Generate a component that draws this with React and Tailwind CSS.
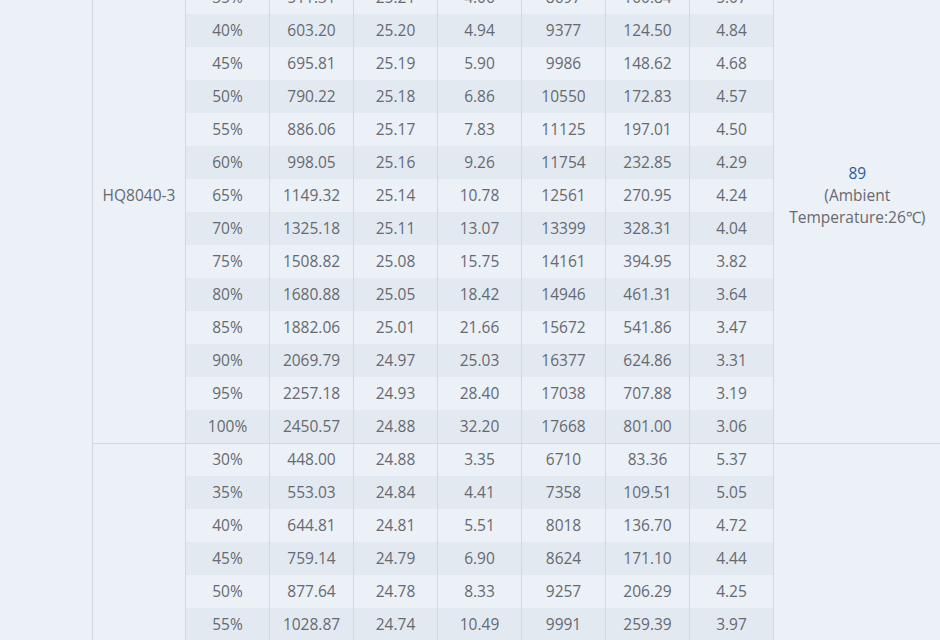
const groupA = [
  ['30%', '420.66', '25.22', '3.21', '7912', '79.40', '5.30'],
  ['35%', '511.31', '25.21', '4.06', '8697', '100.84', '5.07'],
  ['40%', '603.20', '25.20', '4.94', '9377', '124.50', '4.84'],
  ['45%', '695.81', '25.19', '5.90', '9986', '148.62', '4.68'],
  ['50%', '790.22', '25.18', '6.86', '10550', '172.83', '4.57'],
  ['55%', '886.06', '25.17', '7.83', '11125', '197.01', '4.50'],
  ['60%', '998.05', '25.16', '9.26', '11754', '232.85', '4.29'],
  ['65%', '1149.32', '25.14', '10.78', '12561', '270.95', '4.24'],
  ['70%', '1325.18', '25.11', '13.07', '13399', '328.31', '4.04'],
  ['75%', '1508.82', '25.08', '15.75', '14161', '394.95', '3.82'],
  ['80%', '1680.88', '25.05', '18.42', '14946', '461.31', '3.64'],
  ['85%', '1882.06', '25.01', '21.66', '15672', '541.86', '3.47'],
  ['90%', '2069.79', '24.97', '25.03', '16377', '624.86', '3.31'],
  ['95%', '2257.18', '24.93', '28.40', '17038', '707.88', '3.19'],
  ['100%', '2450.57', '24.88', '32.20', '17668', '801.00', '3.06'],
];

const groupB = [
  ['30%', '448.00', '24.88', '3.35', '6710', '83.36', '5.37'],
  ['35%', '553.03', '24.84', '4.41', '7358', '109.51', '5.05'],
  ['40%', '644.81', '24.81', '5.51', '8018', '136.70', '4.72'],
  ['45%', '759.14', '24.79', '6.90', '8624', '171.10', '4.44'],
  ['50%', '877.64', '24.78', '8.33', '9257', '206.29', '4.25'],
  ['55%', '1028.87', '24.74', '10.49', '9991', '259.39', '3.97'],
  ['60%', '1209.52', '24.70', '12.61', '10804', '311.74', '3.73'],
];

const Group = ({ rows, model, temp, offset, divider }) => (
  <>
    {rows.map((r, i) => {
      // stripes follow the row index across the whole table
      const striped = (i + offset) % 2 === 0;
      return (
        <tr key={r[0]} className={i === 0 && divider ? 'border-t border-[#d3d8e0]' : ''}>
          {i === 0 && (
            <td rowSpan={rows.length} className="border-x border-[#d3d8e0] text-center align-middle">
              {model}
            </td>
          )}
          {r.map((v, j) => (
            <td
              key={j}
              className={`h-[33px] p-0 text-center border-r border-[#d3d8e0] ${striped ? 'bg-[#e3e9f1]' : ''}`}
            >
              {v}
            </td>
          ))}
          {i === 0 && (
            <td rowSpan={rows.length} className="text-center align-middle leading-[22px]">
              {temp && (
                <>
                  <div className="text-[#2d5c9b]">{temp}</div>
                  <div>(Ambient</div>
                  <div className="whitespace-nowrap">Temperature:26℃)</div>
                </>
              )}
            </td>
          )}
        </tr>
      );
    })}
  </>
);

export default function App() {
  return (
    <div
      className="h-[640px] w-[940px] overflow-hidden bg-[#ecf0f7] text-[15.5px] text-[#666a70]"
      style={{ fontFamily: '"Open Sans", "Liberation Sans", sans-serif' }}
    >
      <table className="-mt-[52px] ml-[92px] table-fixed border-collapse w-[848px]">
        <colgroup>
          <col className="w-[93px]" />
          <col className="w-[84px]" />
          <col className="w-[84px]" />
          <col className="w-[84px]" />
          <col className="w-[84px]" />
          <col className="w-[84px]" />
          <col className="w-[84px]" />
          <col className="w-[84px]" />
          <col className="w-[167px]" />
        </colgroup>
        <tbody>
          <Group rows={groupA} model="HQ8040-3" temp="89" offset={0} divider={false} />
          <Group rows={groupB} model="" temp="" offset={1} divider />
        </tbody>
      </table>
    </div>
  );
}
